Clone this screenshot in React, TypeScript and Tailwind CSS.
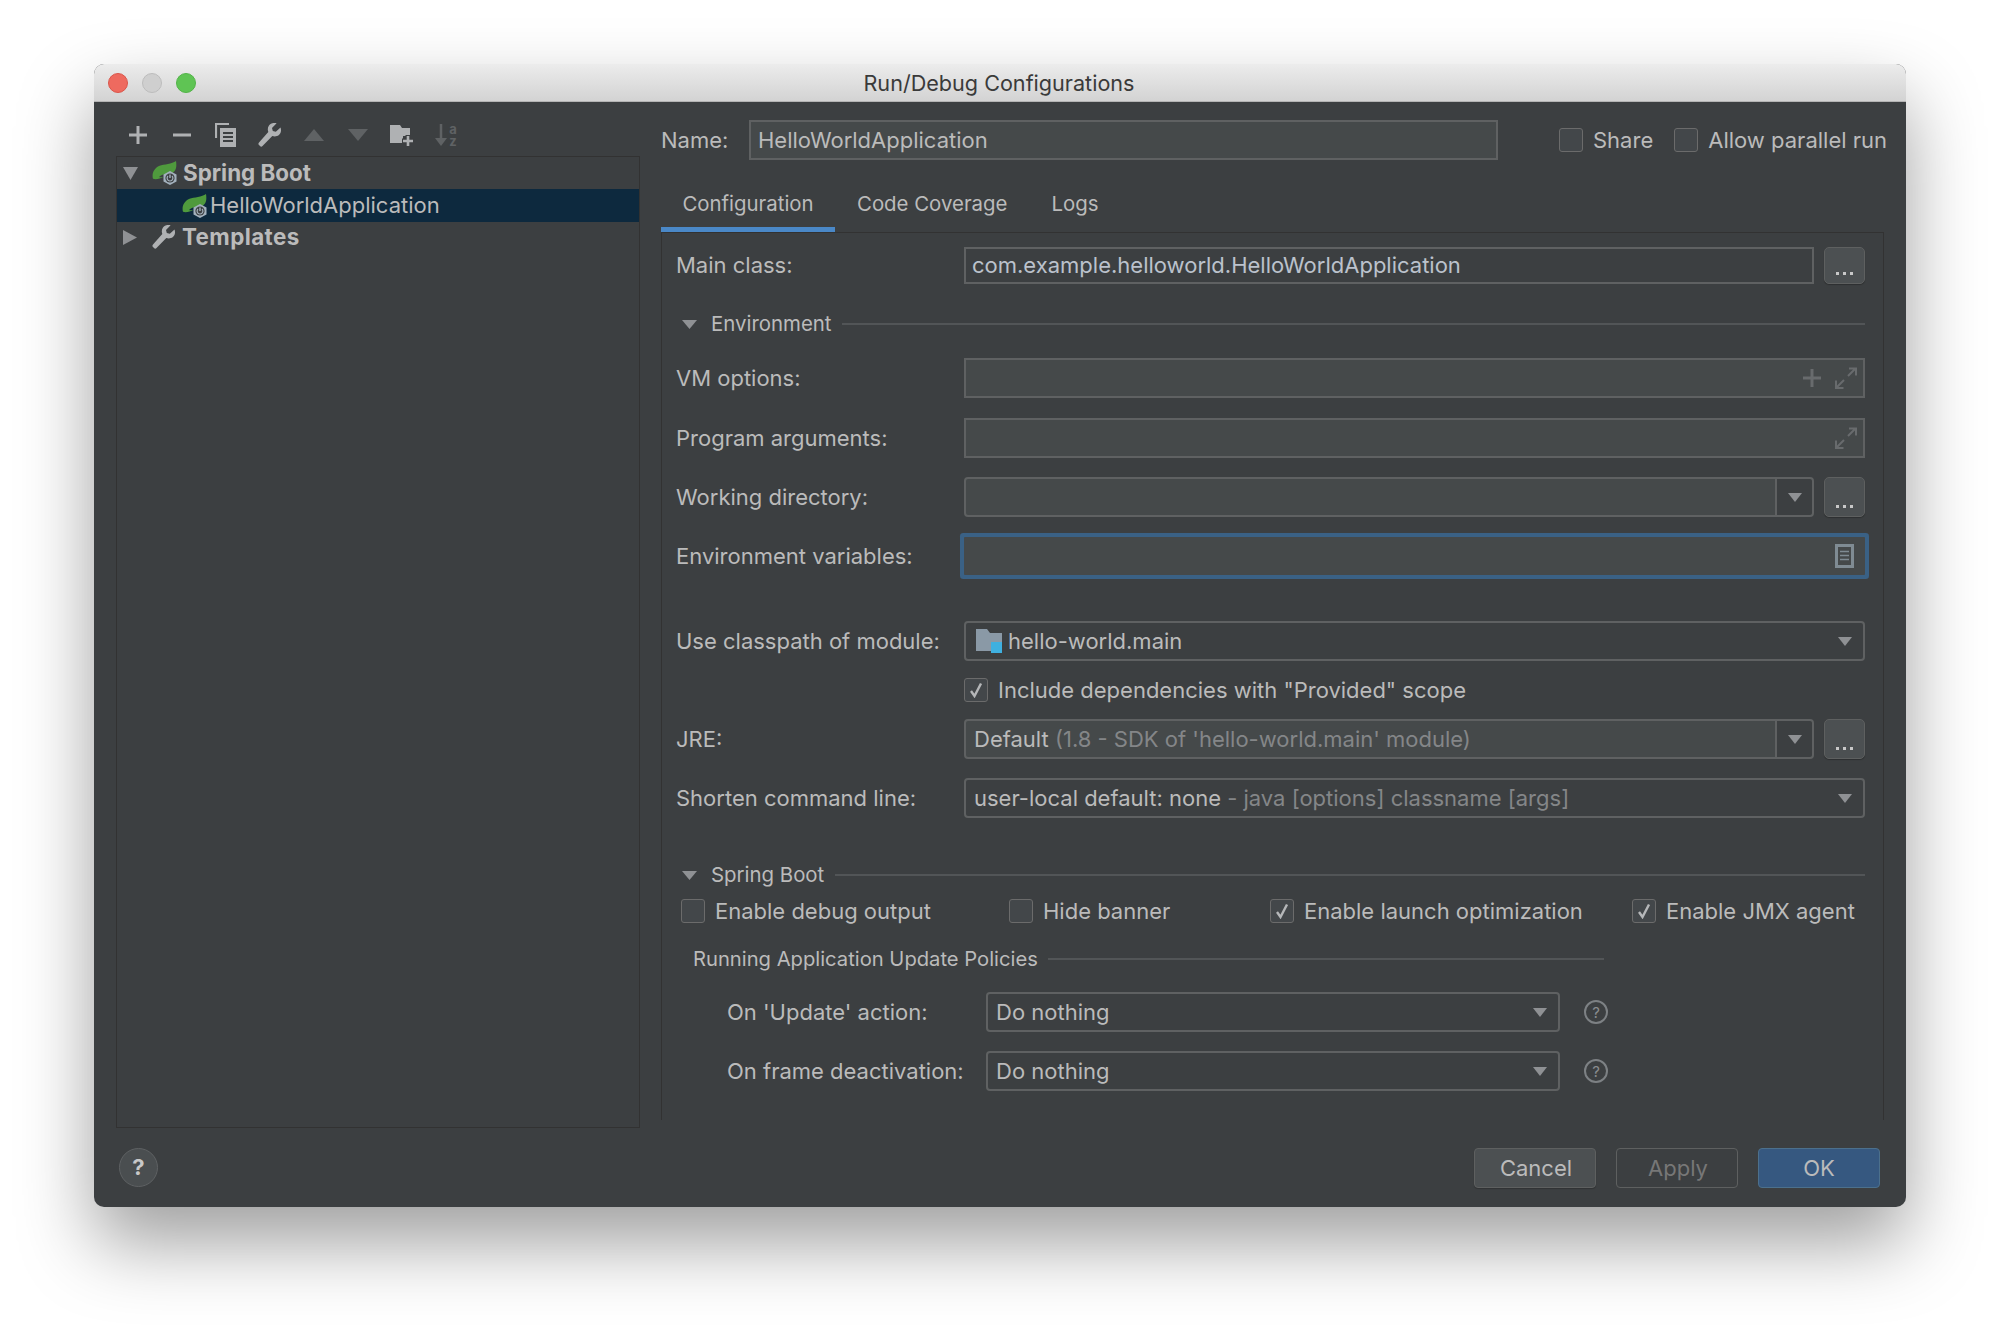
import React from 'react';

const font = "[font-family:Inter,'Noto_Sans',sans-serif]";

const Tri = ({ dir = 'down', color = '#8f9194', w = 16, h = 10 }: { dir?: 'down' | 'up' | 'right'; color?: string; w?: number; h?: number }) => {
  const points = dir === 'down' ? `0,0 ${w},0 ${w / 2},${h}` : dir === 'up' ? `0,${h} ${w},${h} ${w / 2},0` : `0,0 ${w},${h / 2} 0,${h}`;
  return (
    <svg width={w} height={h} viewBox={`0 0 ${w} ${h}`} className="shrink-0">
      <polygon points={points} fill={color} />
    </svg>
  );
};

const Spring = () => (
  <svg width="26" height="24" viewBox="0 0 26 24" className="shrink-0">
    <path d="M24 0c.6 4 .5 7-1 9.500-2 3-5.500 4-9 3.800-2.500 0-5 .7-7 2.700 1.500.3 3 .2 4.500-.2-3 1.800-7.500 3-10.500 2C-.5 13 2 7 7.500 4.800 12 3.200 20 3.200 24 0z" fill="#4f9a3d" />
    <polygon points="18,10 24.500,13.500 24.500,20.500 18,24 11.500,20.500 11.500,13.500" fill="#a3b1bd" />
    <circle cx="18" cy="17" r="4.600" fill="#3c3f41" />
    <path d="M18 13.500v3.500" stroke="#a3b1bd" strokeWidth="1.400" />
    <path d="M16 15a2.900 2.900 0 1 0 4 0" stroke="#a3b1bd" strokeWidth="1.200" fill="none" />
  </svg>
);

const Wrench = ({ color = '#afb1b3', size = 24 }: { color?: string; size?: number }) => (
  <svg width={size} height={size} viewBox="0 0 24 24" className="shrink-0">
    <path d="M22.500 4.500l-4.700 4.200-3-.8-.8-3L18.600.3c-2.800-.9-6 0-7.600 2.300-1.400 2-1.500 4.300-.7 6.400L1 19.500c-.8.800-.8 1.800 0 2.600l1 1c.8.800 1.800.7 2.500 0L14.300 13c2.200.8 4.700.5 6.600-1 2-1.700 2.700-4.700 1.600-7.500z" fill={color} />
  </svg>
);

const Expand = () => (
  <svg width="22" height="22" viewBox="0 0 22 22" className="shrink-0">
    <path d="M13 9l7-7M14 1.500h7v7M9 13l-7 7M1 13.500V21h7.500" stroke="#686b6d" strokeWidth="2" fill="none" />
  </svg>
);

const Check = () => (
  <svg width="14" height="16" viewBox="0 0 14 16">
    <path d="M2 9l3.500 5L12 1.500" stroke="#b5b7b9" strokeWidth="2.400" fill="none" />
  </svg>
);

const CheckBox = ({ checked }: { checked?: boolean }) => (
  <span className="w-[24px] h-[24px] shrink-0 rounded-[3px] border border-[#6b6b6b] bg-[#43474a] flex items-center justify-center">
    {checked && <Check />}
  </span>
);

const CheckItem = ({ label, checked, className = '' }: { label: string; checked?: boolean; className?: string }) => (
  <div className={`h-[24px] flex items-center gap-[10px] ${className}`}>
    <CheckBox checked={checked} />
    <span className="text-[#bbbbbb] whitespace-nowrap">{label}</span>
  </div>
);

const Label = ({ children }: { children: React.ReactNode }) => (
  <div className="w-[288px] shrink-0 text-[#bbbbbb] whitespace-nowrap">{children}</div>
);

const Dots = ({ h = 'h-[40px]' }: { h?: string }) => (
  <button className={`w-[41px] ${h} ml-[10px] shrink-0 rounded-[5px] border border-[#5e6060] bg-[#4c5052] text-[#bbbbbb] flex items-end justify-center pb-[8px] shadow-[0_1px_1px_rgba(0,0,0,0.25)]`}>
    <span className="flex gap-[4px]">
      <i className="w-[3px] h-[3px] bg-[#c8c8c8]" />
      <i className="w-[3px] h-[3px] bg-[#c8c8c8]" />
      <i className="w-[3px] h-[3px] bg-[#c8c8c8]" />
    </span>
  </button>
);

const Section = ({ label }: { label: string }) => (
  <div className="flex items-center h-[20px] pl-[6px]">
    <Tri w={15} h={9} />
    <span className="ml-[14px] text-[20.4px] text-[#bbbbbb] whitespace-nowrap">{label}</span>
    <span className="flex-1 h-[2px] bg-[#525557] ml-[11px]" />
  </div>
);

const Combo = ({ children, className = '' }: { children: React.ReactNode; className?: string }) => (
  <div className={`h-[40px] rounded-[4px] border-2 border-[#5f6162] flex items-center pl-[8px] pr-[11px] text-[#bbbbbb] ${className}`}>
    <div className="flex-1 whitespace-nowrap flex items-center">{children}</div>
    <Tri w={14} h={9} />
  </div>
);

const SplitCombo = ({ children }: { children?: React.ReactNode }) => (
  <div className="w-[850px] h-[40px] rounded-[4px] border-2 border-[#5f6162] bg-[#45494a] flex items-stretch text-[#bbbbbb]">
    <div className="flex-1 pl-[8px] flex items-center whitespace-nowrap">{children}</div>
    <div className="w-[37px] border-l-2 border-[#5f6162] bg-[#3c3f41] rounded-r-[3px] flex items-center justify-center">
      <Tri w={14} h={9} />
    </div>
  </div>
);

const Help = () => (
  <span className="w-[24px] h-[24px] ml-[24px] shrink-0 rounded-full border-2 border-[#7d8184] text-[#8a8d90] text-[15px] leading-none flex items-center justify-center">?</span>
);

const toolIcon = 'w-[44px] flex justify-center items-center';

const Toolbar = () => (
  <div className="h-[54px] flex items-center pt-[12px] text-[#5f6264]">
    <div className={toolIcon}>
      <svg width="18" height="18" viewBox="0 0 18 18"><path d="M9 0v18M0 9h18" stroke="#afb1b3" strokeWidth="3" /></svg>
    </div>
    <div className={toolIcon}>
      <svg width="18" height="4" viewBox="0 0 18 4"><path d="M0 2h18" stroke="#afb1b3" strokeWidth="3" /></svg>
    </div>
    <div className={toolIcon}>
      <svg width="22" height="24" viewBox="0 0 22 24">
        <path d="M1 15V1h13" stroke="#afb1b3" strokeWidth="2.200" fill="none" />
        <path d="M5 5h16v19H5z" fill="#afb1b3" />
        <path d="M8 10h10M8 14h10M8 18h10" stroke="#3c3f41" strokeWidth="1.800" />
      </svg>
    </div>
    <div className={toolIcon}><Wrench /></div>
    <div className={toolIcon}><Tri dir="up" color="#5f6264" w={20} h={12} /></div>
    <div className={toolIcon}><Tri color="#5f6264" w={20} h={12} /></div>
    <div className={toolIcon}>
      <svg width="24" height="24" viewBox="0 0 24 24">
        <path d="M0 2h10l2 3h8v8h-7v7H0z" fill="#afb1b3" />
        <path d="M18 12v12M12 18h12" stroke="#3c3f41" strokeWidth="5" />
        <path d="M18 13v10M13 18h10" stroke="#afb1b3" strokeWidth="2.600" />
      </svg>
    </div>
    <div className={toolIcon}>
      <div className="flex items-center gap-[2px]">
        <svg width="12" height="24" viewBox="0 0 12 24">
          <path d="M6 1v18" stroke="#5f6264" strokeWidth="2.500" />
          <path d="M0 15h12l-6 8z" fill="#5f6264" />
        </svg>
        <div className="flex flex-col text-[13px] leading-[12px] font-bold">
          <span>a</span>
          <span>z</span>
        </div>
      </div>
    </div>
  </div>
);

const Tree = () => (
  <div className="h-[972px] border border-[#323232] text-[#bbbbbb]">
    <div className="h-[32px] flex items-center pl-[6px] font-bold text-[22.4px]">
      <Tri w={15} h={13} />
      <span className="ml-[14px]"><Spring /></span>
      <span className="ml-[5px]">Spring Boot</span>
    </div>
    <div className="h-[33px] flex items-center pl-[65px] bg-[#0d293e]">
      <Spring />
      <span className="ml-[2px]">HelloWorldApplication</span>
    </div>
    <div className="h-[30px] flex items-center pl-[6px] font-bold text-[22.4px] tracking-[0.4px]">
      <Tri dir="right" w={14} h={15} />
      <span className="ml-[15px]"><Wrench /></span>
      <span className="ml-[6px]">Templates</span>
    </div>
  </div>
);

const Footer = () => (
  <div className="flex-1 flex items-start justify-between pt-[20px] pl-[25px] pr-[26px]">
    <div className="w-[39px] h-[39px] rounded-full border border-[#5e6163] bg-[#4a4e50] flex items-center justify-center text-[#c8c8c8] font-bold">?</div>
    <div className="flex gap-[20px] text-[#bbbbbb]">
      <button className="w-[122px] h-[40px] pl-[2px] rounded-[4px] border border-[#5e6060] bg-[#4c5052] shadow-[0_1px_1px_rgba(0,0,0,0.2)]">Cancel</button>
      <button className="w-[122px] h-[40px] pl-[2px] rounded-[4px] border border-[#5e6060] text-[#777777]">Apply</button>
      <button className="w-[122px] h-[40px] rounded-[4px] border border-[#4c708c] bg-[#365880]">OK</button>
    </div>
  </div>
);

const ConfigPanel = () => (
  <div className="h-[888px] border-t border-x border-[#323232] pt-[14px] pl-[14px] pr-[18px]">
    <div className="flex items-center">
      <Label>Main class:</Label>
      <div className="w-[850px] h-[37px] border-2 border-[#5f6162] flex items-center pl-[6px] text-[#bbc2cc] whitespace-nowrap">com.example.helloworld.HelloWorldApplication</div>
      <Dots h="h-[37px]" />
    </div>
    <div className="mt-[30px]"><Section label="Environment" /></div>

    <div className="mt-[24px] flex items-center">
      <Label>VM options:</Label>
      <div className="flex-1 h-[40px] border-2 border-[#5f6162] bg-[#45494a] flex items-center justify-end gap-[14px] pr-[6px]">
        <svg width="18" height="18" viewBox="0 0 18 18"><path d="M9 0v18M0 9h18" stroke="#686b6d" strokeWidth="3" /></svg>
        <Expand />
      </div>
    </div>
    <div className="mt-[20px] flex items-center">
      <Label>Program arguments:</Label>
      <div className="flex-1 h-[40px] border-2 border-[#5f6162] bg-[#45494a] flex items-center justify-end pr-[6px]">
        <Expand />
      </div>
    </div>
    <div className="mt-[19px] flex items-center">
      <Label>Working directory:</Label>
      <SplitCombo />
      <Dots />
    </div>
    <div className="mt-[20px] h-[38px] flex items-center">
      <Label>Environment variables:</Label>
      <div className="flex-1 h-[38px] bg-[#45494a] ring-[4px] ring-[#3a6185] rounded-[1px] flex items-center justify-end pr-[11px]">
        <svg width="19" height="24" viewBox="0 0 19 24">
          <rect x="1.500" y="1.500" width="16" height="21" stroke="#7f8b93" strokeWidth="3" fill="none" />
          <path d="M5 7.500h9M5 11.500h9M5 15.500h9" stroke="#7f8b93" strokeWidth="1.600" />
        </svg>
      </div>
    </div>

    <div className="mt-[46px] flex items-center">
      <Label>Use classpath of module:</Label>
      <Combo className="flex-1">
        <svg width="27" height="24" viewBox="0 0 27 24" className="shrink-0 mr-[5px] ml-[2px]">
          <path d="M0 0h11l3 4h12v12H15v6H0z" fill="#8a99a6" />
          <rect x="15" y="13" width="11" height="11" fill="#3fb0e0" />
        </svg>
        hello-world.main
      </Combo>
    </div>
    <div className="mt-[17px] flex items-center pl-[288px]">
      <CheckItem label={'Include dependencies with "Provided" scope'} checked />
    </div>
    <div className="mt-[17px] flex items-center">
      <Label>JRE:</Label>
      <SplitCombo>
        Default<span className="text-[#848688]">&nbsp;(1.8 - SDK of 'hello-world.main' module)</span>
      </SplitCombo>
      <Dots />
    </div>
    <div className="mt-[19px] flex items-center">
      <Label>Shorten command line:</Label>
      <Combo className="flex-1">
        user-local default: none<span className="text-[#848688]">&nbsp;- java [options] classname [args]</span>
      </Combo>
    </div>

    <div className="mt-[47px]"><Section label="Spring Boot" /></div>
    <div className="mt-[14px] flex items-center pl-[5px]">
      <CheckItem label="Enable debug output" className="w-[328px]" />
      <CheckItem label="Hide banner" className="w-[261px]" />
      <CheckItem label="Enable launch optimization" checked className="w-[362px]" />
      <CheckItem label="Enable JMX agent" checked />
    </div>
    <div className="mt-[26px] h-[20px] flex items-center pl-[17px] w-[928px]">
      <span className="text-[20.2px] text-[#bbbbbb] whitespace-nowrap">Running Application Update Policies</span>
      <span className="flex-1 h-[2px] bg-[#525557] ml-[10px]" />
    </div>
    <div className="mt-[23px] flex items-center pl-[51px]">
      <div className="w-[259px] shrink-0 text-[#bbbbbb] whitespace-nowrap">On 'Update' action:</div>
      <Combo className="w-[574px]">Do nothing</Combo>
      <Help />
    </div>
    <div className="mt-[19px] flex items-center pl-[51px]">
      <div className="w-[259px] shrink-0 text-[#bbbbbb] whitespace-nowrap">On frame deactivation:</div>
      <Combo className="w-[574px]">Do nothing</Combo>
      <Help />
    </div>
  </div>
);

const Window = () => (
  <div className="w-[1812px] h-[1143px] rounded-[10px] bg-[#3c3f41] shadow-[0_36px_74px_rgba(0,0,0,0.38)] overflow-hidden flex flex-col">
    <div className="h-[38px] shrink-0 bg-gradient-to-b from-[#ececec] to-[#d3d3d3] border-b border-[#b4b4b4] flex items-center">
      <div className="flex gap-[14px] pl-[14px]">
        <span className="w-[20px] h-[20px] rounded-full bg-[#ee6a5f] border border-[#d9564b]" />
        <span className="w-[20px] h-[20px] rounded-full bg-[#cfcfcf] border border-[#bcbcbc]" />
        <span className="w-[20px] h-[20px] rounded-full bg-[#5fc454] border border-[#52b348]" />
      </div>
      <span className="flex-1 text-center text-[#3a3a3a] text-[21.6px] pt-[2px] pr-[104px] whitespace-nowrap">Run/Debug Configurations</span>
    </div>
    <div className="flex pl-[22px] pr-[21px] h-[1026px] shrink-0">
      <div className="w-[524px] shrink-0">
        <Toolbar />
        <Tree />
      </div>
      <div className="ml-[21px] w-[1223px] shrink-0 pt-[18px]">
        <div className="h-[40px] flex items-center">
          <span className="w-[88px] shrink-0 text-[#bbbbbb]">Name:</span>
          <div className="w-[749px] shrink-0 h-[40px] border-2 border-[#5f6162] bg-[#45494a] flex items-center pl-[7px] text-[#bbbbbb]">HelloWorldApplication</div>
          <CheckItem label="Share" className="ml-[61px] shrink-0" />
          <CheckItem label="Allow parallel run" className="ml-[21px] shrink-0" />
        </div>
        <div className="h-[72px] flex items-end text-[20.4px]">
          <div className="w-[174px] h-[60px] border-b-[5px] border-[#4a88c7] flex items-center justify-center text-[#bbbbbb] pt-[10px]">Configuration</div>
          <div className="ml-[22px] text-[#bbbbbb] h-[60px] flex items-center pb-[5px] pt-[10px]">Code Coverage</div>
          <div className="ml-[44px] text-[#bbbbbb] h-[60px] flex items-center pb-[5px] pt-[10px]">Logs</div>
        </div>
        <ConfigPanel />
      </div>
    </div>
    <Footer />
  </div>
);

export default function App() {
  return (
    <div className={`w-[2000px] h-[1332px] bg-white overflow-hidden pt-[64px] pl-[94px] text-[22px] ${font}`}>
      <Window />
    </div>
  );
}
